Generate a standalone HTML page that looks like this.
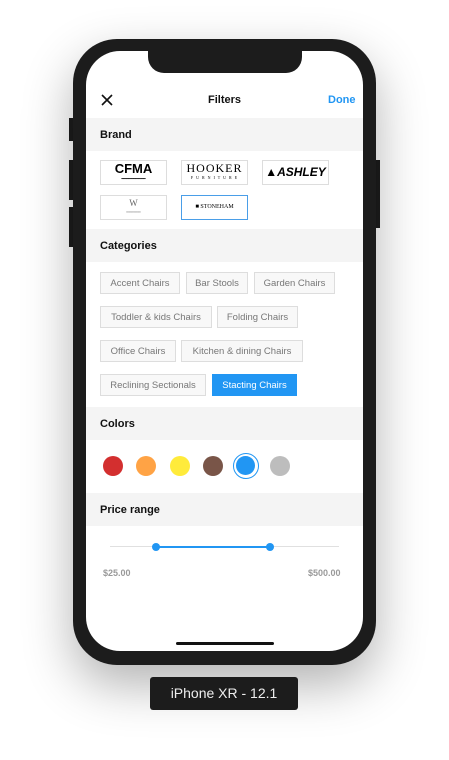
<!DOCTYPE html>
<html><head><meta charset="utf-8"><style>
*{margin:0;padding:0;box-sizing:border-box}
body{width:449px;height:760px;background:#fff;position:relative;overflow:hidden;font-family:"Liberation Sans",sans-serif}
.a{position:absolute}
.phone{left:73px;top:39px;width:303px;height:626px;background:#1c1c1c;border-radius:44px;box-shadow:0 20px 50px rgba(0,0,0,.3)}
.screen{left:86px;top:51px;width:277px;height:600px;background:#fff;border-radius:34px;overflow:hidden}
.notch{left:62px;top:-2px;width:154px;height:24px;background:#1c1c1c;border-radius:0 0 16px 16px}
.sec{left:0;width:277px;height:33px;background:#f4f4f4;font-size:11px;font-weight:bold;color:#111;padding:11px 0 0 14px}
.logo{width:67px;height:25px;border:1px solid #ddd;background:#fff;font-size:9px;text-align:center}
.chip{height:22px;border:1px solid #ddd;background:#f8f8f8;color:#777;font-size:9.5px;line-height:22px;text-align:center}
.dot{width:20px;height:20px;border-radius:50%}
.btn{background:#1c1c1c;width:4px}
</style></head><body>
<div class="a btn" style="left:69px;top:118px;height:23px"></div>
<div class="a btn" style="left:69px;top:160px;height:40px"></div>
<div class="a btn" style="left:69px;top:207px;height:40px"></div>
<div class="a btn" style="left:376px;top:160px;height:68px"></div>
<div class="a phone"></div>
<div class="a screen">
 <div class="a notch"></div>
 <svg class="a" style="left:15px;top:43px" width="12" height="12"><path d="M1 1L11 11M11 1L1 11" stroke="#111" stroke-width="1.6"/></svg>
 <div class="a" style="left:0;width:277px;top:43px;text-align:center;font-size:11px;font-weight:bold;color:#111">Filters</div>
 <div class="a" style="left:242px;top:43px;font-size:11px;font-weight:bold;color:#2196f3">Done</div>
 <div class="a sec" style="top:67px">Brand</div>
 <div class="a logo" style="left:14px;top:109px;font-weight:900;font-size:13px;line-height:16px">CFMA<div style="font-size:4px;line-height:4px">━━━━━━━━━━</div></div>
 <div class="a logo" style="left:95px;top:109px;font-family:'Liberation Serif',serif;font-size:12px;line-height:15px;letter-spacing:1px">HOOKER<div style="font-size:4px;line-height:4px">F U R N I T U R E</div></div>
 <div class="a logo" style="left:176px;top:109px;font-weight:900;font-size:12px;line-height:23px;font-style:italic">▲ASHLEY</div>
 <div class="a logo" style="left:14px;top:144px;font-family:'Liberation Serif',serif;font-size:9px;color:#666;line-height:14px">W<div style="font-size:3px;line-height:4px">━━━━━━━━</div></div>
 <div class="a logo" style="left:95px;top:144px;border-color:#4a9ee8;font-size:6px;line-height:23px;font-family:'Liberation Serif',serif">■ STONEHAM</div>
 <div class="a sec" style="top:178px">Categories</div>
 <div class="a chip" style="left:14px;top:221px;width:80px">Accent Chairs</div>
 <div class="a chip" style="left:100px;top:221px;width:62px">Bar Stools</div>
 <div class="a chip" style="left:168px;top:221px;width:81px">Garden Chairs</div>
 <div class="a chip" style="left:14px;top:255px;width:112px">Toddler &amp; kids Chairs</div>
 <div class="a chip" style="left:131px;top:255px;width:81px">Folding Chairs</div>
 <div class="a chip" style="left:14px;top:289px;width:76px">Office Chairs</div>
 <div class="a chip" style="left:95px;top:289px;width:122px">Kitchen &amp; dining Chairs</div>
 <div class="a chip" style="left:14px;top:323px;width:106px">Reclining Sectionals</div>
 <div class="a chip" style="left:126px;top:323px;width:85px;background:#2196f3;border-color:#2196f3;color:#fff">Stacting Chairs</div>
 <div class="a sec" style="top:356px">Colors</div>
 <div class="a dot" style="left:17px;top:405px;background:#d32f2f"></div>
 <div class="a dot" style="left:50px;top:405px;background:#ffa345"></div>
 <div class="a dot" style="left:84px;top:405px;background:#ffeb3b"></div>
 <div class="a dot" style="left:117px;top:405px;background:#795548"></div>
 <div class="a" style="left:147px;top:402px;width:26px;height:26px;border-radius:50%;border:1.5px solid #2196f3;padding:2px"><div style="width:19px;height:19px;border-radius:50%;background:#2196f3"></div></div>
 <div class="a dot" style="left:184px;top:405px;background:#bdbdbd"></div>
 <div class="a sec" style="top:442px">Price range</div>
 <div class="a" style="left:24px;top:495px;width:229px;height:1px;background:#e0e0e0"></div>
 <div class="a" style="left:70px;top:495px;width:114px;height:1.5px;background:#2196f3"></div>
 <div class="a dot" style="left:66px;top:492px;width:8px;height:8px;background:#2196f3"></div>
 <div class="a dot" style="left:180px;top:492px;width:8px;height:8px;background:#2196f3"></div>
 <div class="a" style="left:17px;top:517px;font-size:9px;font-weight:bold;color:#999">$25.00</div>
 <div class="a" style="left:222px;top:517px;font-size:9px;font-weight:bold;color:#999">$500.00</div>
 <div class="a" style="left:90px;top:591px;width:98px;height:3px;border-radius:2px;background:#111"></div>
</div>
<div class="a" style="left:150px;top:677px;width:148px;height:33px;background:#1c1c1c;border-radius:3px;color:#eee;font-size:14px;text-align:center;line-height:33px">iPhone XR - 12.1</div>
</body></html>
